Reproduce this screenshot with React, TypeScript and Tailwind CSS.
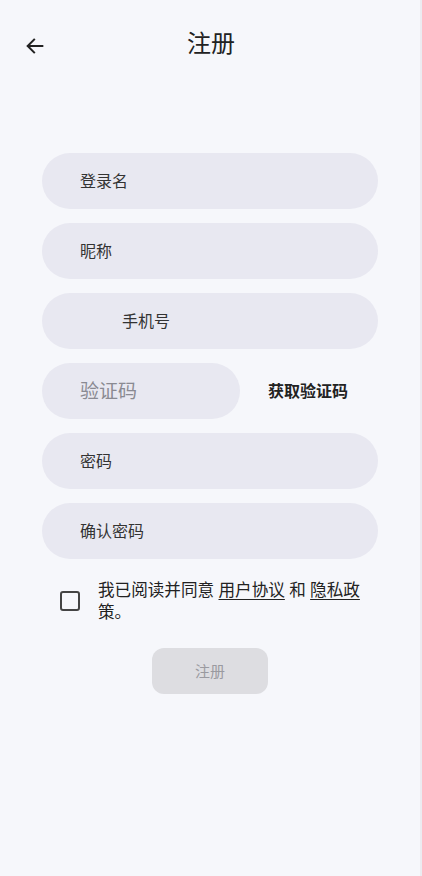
export default function App() {
  const fields = ["登录名", "昵称"];
  return (
    <div
      className="relative h-[876px] w-[422px] overflow-hidden bg-[#f6f7fb] text-[#222]"
      style={{ fontFamily: '"Noto Sans", "Noto Sans CJK SC", sans-serif' }}
    >
      {/* right edge strip */}
      <div className="absolute right-0 top-0 h-full w-[2px] bg-[#ececf1]" />

      <header className="relative flex h-[88px] items-center justify-center">
        <button className="absolute left-[20px] top-[31px] p-1">
          <svg width="22" height="22" viewBox="0 0 24 24" fill="none" stroke="#222" strokeWidth="2.2" strokeLinecap="square">
            <path d="M20 12H5" />
            <path d="M11 5l-7 7 7 7" />
          </svg>
        </button>
        <h1 className="-mt-[2px] text-[24px] font-normal leading-none">注册</h1>
      </header>

      <form className="flex flex-col gap-[14px] pl-[42px] pr-[44px] pt-[65px]">
        {fields.map((f) => (
          <div key={f} className="flex h-[56px] items-center rounded-full bg-[#e8e8f1] pl-[38px] text-[16px] text-[#333]">
            {f}
          </div>
        ))}
        <div className="flex h-[56px] items-center rounded-full bg-[#e8e8f1] pl-[80px] text-[16px] text-[#333]">
          手机号
        </div>
        <div className="flex items-center">
          <div className="flex h-[56px] w-[198px] items-center rounded-full bg-[#e8e8f1] pl-[38px] text-[19px] text-[#8a8a92]">
            验证码
          </div>
          <span className="ml-[28px] text-[16px] font-bold text-[#222]">获取验证码</span>
        </div>
        <div className="flex h-[56px] items-center rounded-full bg-[#e8e8f1] pl-[38px] text-[16px] text-[#333]">
          密码
        </div>
        <div className="flex h-[56px] items-center rounded-full bg-[#e8e8f1] pl-[38px] text-[16px] text-[#333]">
          确认密码
        </div>

        <div className="mt-[6px] flex items-start pl-[18px]">
          <div className="mt-[12px] h-[20px] w-[20px] shrink-0 rounded-[3px] border-2 border-[#444]" />
          <p className="ml-[18px] w-[272px] text-[16.6px] leading-[22px] text-[#222]">
            我已阅读并同意 <span className="underline underline-offset-[3px]">用户协议</span> 和{" "}
            <span className="underline underline-offset-[3px]">隐私政</span>策。
          </p>
        </div>

        <div className="mt-[11px] flex justify-center">
          <button
            type="button"
            className="h-[46px] w-[116px] rounded-[12px] bg-[#dddde1] text-[15px] text-[#9a9aa0]"
          >
            注册
          </button>
        </div>
      </form>
    </div>
  );
}
